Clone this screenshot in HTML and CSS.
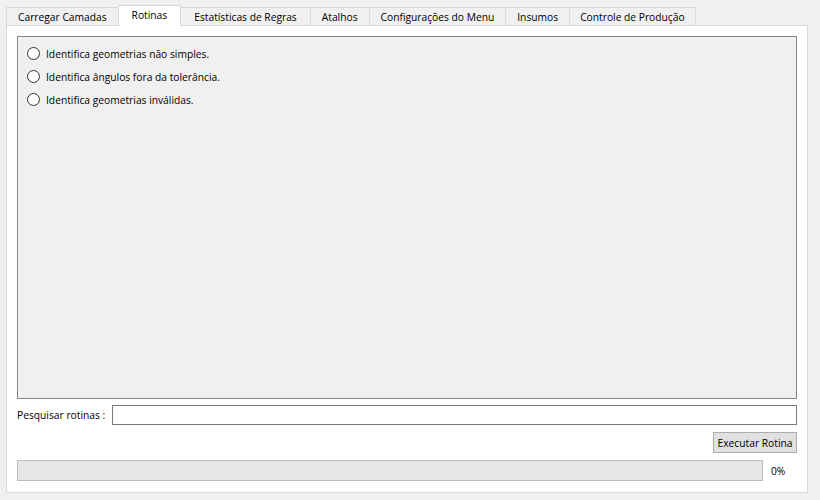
FILE: index.html
```html
<!DOCTYPE html>
<html>
<head>
<meta charset="utf-8">
<link rel="stylesheet" href="styles.css">
</head>
<body>
<div class="window">
  <div class="tabbar">
    <div class="tab">Carregar Camadas</div>
    <div class="tab active">Rotinas</div>
    <div class="tab wide">Estatísticas de Regras</div>
    <div class="tab">Atalhos</div>
    <div class="tab">Configurações do Menu</div>
    <div class="tab">Insumos</div>
    <div class="tab narrow">Controle de Produção</div>
  </div>
  <div class="pane">
    <div class="list">
      <label class="radio"><span class="dot"></span>Identifica geometrias não simples.</label>
      <label class="radio"><span class="dot"></span>Identifica ângulos fora da tolerância.</label>
      <label class="radio"><span class="dot"></span>Identifica geometrias inválidas.</label>
    </div>
    <div class="search">
      <span class="search-label">Pesquisar rotinas :</span>
      <div class="input"></div>
    </div>
    <div class="actions">
      <div class="button">Executar Rotina</div>
    </div>
    <div class="progress-row">
      <div class="progress"></div>
      <span class="pct">0%</span>
    </div>
  </div>
</div>
</body>
</html>
```
FILE: styles.css
```css
html, body {
  margin: 0;
  padding: 0;
  background: #f0f0f0;
  width: 820px;
  height: 500px;
  overflow: hidden;
  font-family: "Open Sans", "DejaVu Sans", sans-serif;
  font-size: 10.25px;
  color: #000;
}
.window {
  padding: 4px 12px 0 6px;
  display: flex;
  flex-direction: column;
}
.tabbar {
  display: flex;
  align-items: flex-end;
  height: 21px;
  position: relative;
  z-index: 1;
}
.tab {
  height: 18px;
  box-sizing: border-box;
  border: 1px solid #d9d9d9;
  border-bottom: none;
  border-left: none;
  background: #f0f0f0;
  padding: 0 11px;
  display: flex;
  align-items: center;
  justify-content: center;
  white-space: nowrap;
}
.tab:first-child { border-left: 1px solid #d9d9d9; }
.tab.wide { padding: 0 13px; }
.tab.narrow { padding: 0 10px; }
.tab.active {
  height: 21px;
  margin-bottom: -1px;
  background: #fff;
  border-left: 1px solid #d9d9d9;
  margin-left: -1px;
  padding: 0 13px 2px 13px;
}
.pane {
  width: 802px;
  height: 468px;
  box-sizing: border-box;
  background: #fff;
  border: 1px solid #d9d9d9;
  padding: 10px 10px 0 10px;
  display: flex;
  flex-direction: column;
}
.list {
  height: 363px;
  box-sizing: border-box;
  background: #f0f0f0;
  border: 1px solid #828790;
  padding: 10px 0 0 9px;
  display: flex;
  flex-direction: column;
  gap: 10px;
}
.radio {
  display: flex;
  align-items: center;
  height: 13px;
  gap: 6px;
}
.dot {
  width: 13px;
  height: 13px;
  box-sizing: border-box;
  border: 1px solid #333;
  border-radius: 50%;
  background: #fff;
}
.search {
  margin-top: 6px;
  display: flex;
  align-items: center;
  height: 20px;
}
.search-label { width: 95px; }
.input {
  flex: 1;
  height: 20px;
  box-sizing: border-box;
  border: 1px solid #7a7a7a;
  background: #fff;
}
.actions {
  margin-top: 7px;
  display: flex;
  justify-content: flex-end;
}
.button {
  width: 84px;
  height: 21px;
  box-sizing: border-box;
  background: #e1e1e1;
  border: 1px solid #adadad;
  display: flex;
  align-items: center;
  justify-content: center;
  white-space: nowrap;
}
.progress-row {
  margin-top: 7px;
  display: flex;
  align-items: center;
}
.progress {
  width: 746px;
  height: 21px;
  box-sizing: border-box;
  background: #e6e6e6;
  border: 1px solid #bcbcbc;
}
.pct { margin-left: 8px; }
```
